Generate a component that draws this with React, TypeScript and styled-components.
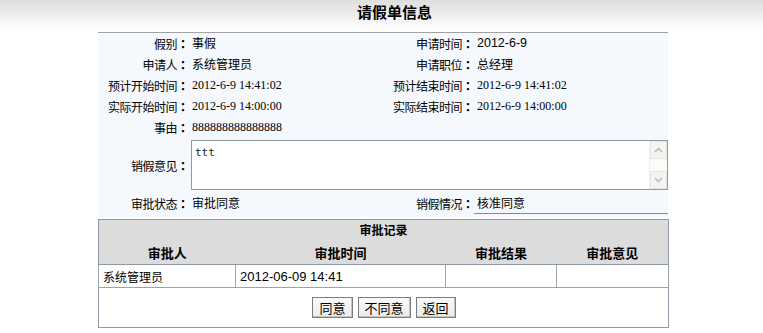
import React, { FC } from 'react';
import styled, { createGlobalStyle } from 'styled-components';

const GlobalStyle = createGlobalStyle`
  html, body {
    margin: 0;
    padding: 0;
    background: #ffffff;
  }
  body {
    font-family: "Noto Sans CJK SC", "Liberation Sans", sans-serif;
    font-size: 12px;
    color: #000;
  }
`;

const info = [
  { label: '假别', value: '事假', label2: '申请时间', value2: '2012-6-9', font2: 'sans' },
  { label: '申请人', value: '系统管理员', label2: '申请职位', value2: '总经理' },
  {
    label: '预计开始时间',
    value: '2012-6-9 14:41:02',
    font: 'serif',
    label2: '预计结束时间',
    value2: '2012-6-9 14:41:02',
    font2: 'serif',
  },
  {
    label: '实际开始时间',
    value: '2012-6-9 14:00:00',
    font: 'serif',
    label2: '实际结束时间',
    value2: '2012-6-9 14:00:00',
    font2: 'serif',
  },
];

const records = [{ who: '系统管理员', time: '2012-06-09 14:41', result: '', note: '' }];

const App: FC = () => {
  return (
    <>
      <GlobalStyle />
      <Header>
        <Title>请假单信息</Title>
      </Header>
      <Page>
        <Panel>
          {info.map((row) => (
            <React.Fragment key={row.label}>
              <Label>{row.label}</Label>
              <Value $font={row.font}>{row.value}</Value>
              <Label>{row.label2}</Label>
              <Value $font={row.font2}>{row.value2}</Value>
            </React.Fragment>
          ))}
          <Label>事由</Label>
          <Value $font="serif" $span={3}>
            888888888888888
          </Value>
          <Label>销假意见</Label>
          <MemoCell>
            <Memo>
              <MemoText defaultValue="ttt" readOnly />
              <ScrollBar>
                <Arrow>
                  <svg width="9" height="6" viewBox="0 0 9 6">
                    <path d="M1 5 L4.5 1.5 L8 5" fill="none" stroke="#b8bcc2" strokeWidth="1.6" />
                  </svg>
                </Arrow>
                <Arrow>
                  <svg width="9" height="6" viewBox="0 0 9 6">
                    <path d="M1 1 L4.5 4.5 L8 1" fill="none" stroke="#b8bcc2" strokeWidth="1.6" />
                  </svg>
                </Arrow>
              </ScrollBar>
            </Memo>
          </MemoCell>
          <Label>审批状态</Label>
          <Value>审批同意</Value>
          <Label>销假情况</Label>
          <Value $underline>核准同意</Value>
        </Panel>

        <RecordTable>
          <colgroup>
            <col style={{ width: 137 }} />
            <col style={{ width: 210 }} />
            <col style={{ width: 111 }} />
            <col style={{ width: 112 }} />
          </colgroup>
          <thead>
            <tr>
              <Caption colSpan={4}>审批记录</Caption>
            </tr>
            <tr>
              <HeadCell>审批人</HeadCell>
              <HeadCell>审批时间</HeadCell>
              <HeadCell>审批结果</HeadCell>
              <HeadCell>审批意见</HeadCell>
            </tr>
          </thead>
          <tbody>
            {records.map((r) => (
              <tr key={r.time}>
                <Cell>{r.who}</Cell>
                <Cell $latin>{r.time}</Cell>
                <Cell>{r.result}</Cell>
                <Cell>{r.note}</Cell>
              </tr>
            ))}
            <tr>
              <ActionCell colSpan={4}>
                <Actions>
                  <Button>同意</Button>
                  <Button>不同意</Button>
                  <Button>返回</Button>
                </Actions>
              </ActionCell>
            </tr>
          </tbody>
        </RecordTable>
      </Page>
    </>
  );
};

const Header = styled.div`
  height: 32px;
  background: linear-gradient(#dedede, #f6f6f6 70%, #ffffff);
  display: flex;
  justify-content: center;
  padding-left: 26px;
`;

const Title = styled.h1`
  margin: 0;
  padding-top: 3px;
  font-size: 15px;
  line-height: 18px;
  font-weight: bold;
`;

const Page = styled.div`
  width: 570px;
  margin-left: 98px;
`;

const Panel = styled.div`
  display: grid;
  grid-template-columns: 91px 195px 90px 194px;
  grid-auto-rows: minmax(21px, auto);
  align-items: center;
  background: #f5f8fd;
  border-top: 1px solid #a2a2a2;
  padding-bottom: 3px;
`;

const Label = styled.div`
  text-align: right;
  white-space: nowrap;
  line-height: 21px;
  letter-spacing: -0.5px;

  &::after {
    content: '：';
    font-family: "Noto Sans CJK JP", sans-serif;
    font-weight: bold;
    letter-spacing: 0;
  }
`;

const Value = styled.div<{ $font?: string; $span?: number; $underline?: boolean }>`
  padding-left: 3px;
  line-height: 20px;
  white-space: nowrap;
  grid-column: span ${({ $span }) => $span || 1};
  font-family: ${({ $font }) =>
    $font === 'serif'
      ? '"Liberation Serif", serif'
      : $font === 'sans'
      ? '"Liberation Sans", sans-serif'
      : '"Noto Sans CJK SC", sans-serif'};
  font-size: ${({ $font }) => ($font === 'sans' ? '12.5px' : '12px')};
  border-bottom: ${({ $underline }) => ($underline ? '1px solid #8a8a8a' : '1px solid transparent')};
`;

const MemoCell = styled.div`
  grid-column: span 3;
  padding: 2px 0 3px 2px;
`;

const Memo = styled.div`
  display: flex;
  height: 48px;
  border: 1px solid #8e9aa5;
  background: #fff;
`;

const MemoText = styled.textarea`
  flex: 1;
  border: none;
  outline: none;
  resize: none;
  padding: 5px 3px;
  margin: 0;
  font-family: "DejaVu Sans Mono", monospace;
  font-size: 11px;
  line-height: 13px;
  color: #222;
  background: transparent;
`;

const ScrollBar = styled.div`
  width: 17px;
  display: flex;
  flex-direction: column;
  justify-content: space-between;
  background: #fbfbf8;
  border-left: 1px solid #f0f0ec;
`;

const Arrow = styled.div`
  height: 16px;
  display: flex;
  align-items: center;
  justify-content: center;
  background: #f4f4f1;
  border: 1px solid #e6e6e2;
`;

const RecordTable = styled.table`
  width: 570px;
  margin-top: 2px;
  border-collapse: collapse;
  table-layout: fixed;
  border: 1px solid #8e9aa6;
`;

const Caption = styled.th`
  height: 20px;
  padding: 0;
  background: #dcdcdc;
  font-size: 12px;
  line-height: 16px;
  font-weight: bold;
  text-align: center;
`;

const HeadCell = styled.th`
  height: 24px;
  padding: 0;
  background: #dcdcdc;
  font-size: 13px;
  font-weight: bold;
  text-align: center;
  border-bottom: 1px solid #8e9aa6;
`;

const Cell = styled.td<{ $latin?: boolean }>`
  height: 22px;
  padding: 0 4px;
  border: 1px solid #9ca5ae;
  font-family: ${({ $latin }) => ($latin ? '"Liberation Sans", sans-serif' : '"Noto Sans CJK SC", sans-serif')};
  font-size: ${({ $latin }) => ($latin ? '13px' : '12px')};
  background: #fff;
`;

const ActionCell = styled.td`
  height: 39px;
  padding: 0;
  background: #fff;
`;

const Actions = styled.div`
  display: flex;
  justify-content: center;
  gap: 5px;
  padding-left: 1px;
`;

const Button = styled.button`
  height: 21px;
  padding: 0 6px;
  font-family: "Noto Sans CJK SC", sans-serif;
  font-size: 13px;
  line-height: 17px;
  color: #000;
  background: linear-gradient(#fafafa, #ebebeb);
  border: 1px solid #7d7d7d;
  border-radius: 0;
  box-shadow: inset -1px -1px 0 #c4c4c4;
  cursor: pointer;
`;

export default App;
